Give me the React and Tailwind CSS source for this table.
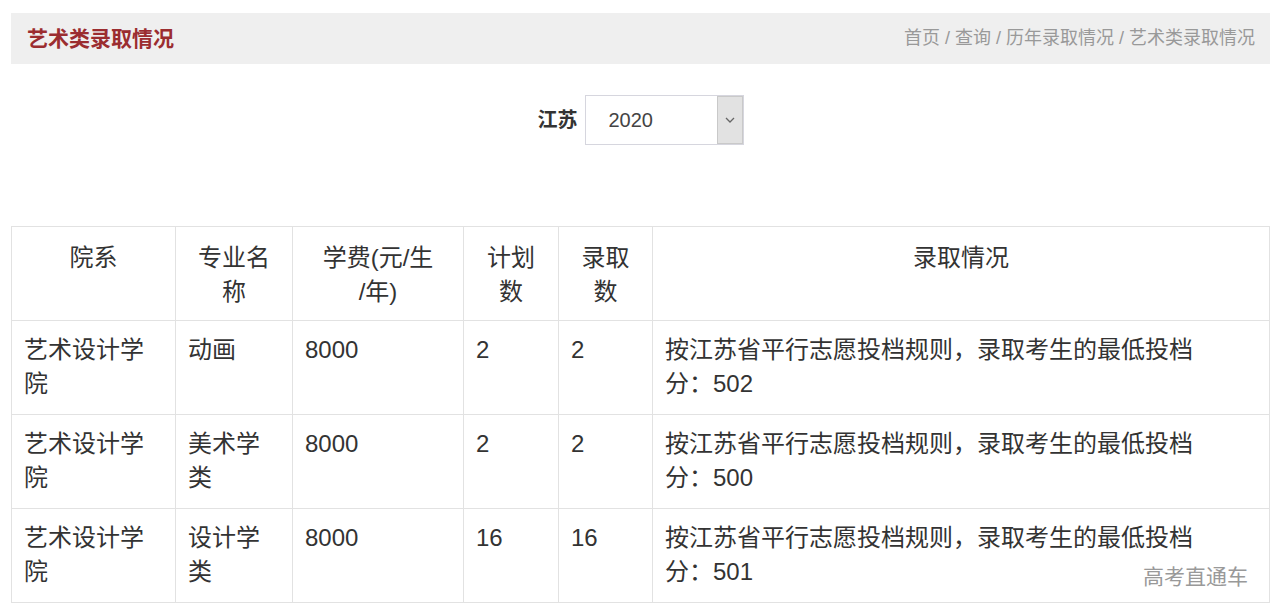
const rows = [
  { dept: "艺术设计学院", major: "动画", fee: "8000", plan: "2", admit: "2", score: "502" },
  { dept: "艺术设计学院", major: "美术学类", fee: "8000", plan: "2", admit: "2", score: "500" },
  { dept: "艺术设计学院", major: "设计学类", fee: "8000", plan: "16", admit: "16", score: "501" },
];

const headers = ["院系", "专业名称", ["学费(元/生", "/年)"], "计划数", "录取数", "录取情况"];

function App() {
  return (
    <div
      className="relative min-h-[615px] bg-white pl-[11px] pr-[10px] pt-[13px] text-[#333]"
      style={{ fontFamily: '"Liberation Sans", "Noto Sans CJK SC", sans-serif' }}
    >
      {/* Title bar */}
      <div className="flex h-[51px] items-center justify-between bg-[#efefef] pl-[16px] pr-[15px]">
        <h1 className="text-[21px] font-bold text-[#9b2d30]">艺术类录取情况</h1>
        <div className="text-[18px] text-[#999]">首页 / 查询 / 历年录取情况 / 艺术类录取情况</div>
      </div>

      {/* Province / year */}
      <div className="mt-[31px] flex items-center justify-center gap-[7px]">
        <span className="text-[20px] font-bold text-[#333]">江苏</span>
        <div className="relative h-[50px] w-[159px]">
          <select
            defaultValue="2020"
            className="h-full w-full appearance-none border border-[#d6d6de] bg-white pl-[23px] text-[20px] text-[#444] outline-none"
          >
            <option>2020</option>
            <option>2019</option>
            <option>2018</option>
          </select>
          <div className="pointer-events-none absolute right-[1px] top-[1px] flex h-[48px] w-[26px] items-center justify-center border border-[#c9c9c9] bg-[#e2e2e2]">
            <svg width="10" height="6" viewBox="0 0 10 6" fill="none">
              <path d="M1 1l4 4 4-4" stroke="#666" strokeWidth="1.3" />
            </svg>
          </div>
        </div>
      </div>

      {/* Table */}
      <table className="mt-[81px] w-full table-fixed border-collapse text-[24px] leading-[34px]">
        <colgroup>
          <col className="w-[164px]" />
          <col className="w-[117px]" />
          <col className="w-[171px]" />
          <col className="w-[95px]" />
          <col className="w-[94px]" />
          <col />
        </colgroup>
        <thead>
          <tr>
            {headers.map((h, i) => (
              <th
                key={i}
                className="h-[94px] border border-[#e2e2e2] px-[12px] pt-[14px] pb-[10px] text-center align-top font-normal"
              >
                {Array.isArray(h) ? (
                  <>
                    {h[0]}
                    <br />
                    {h[1]}
                  </>
                ) : (
                  h
                )}
              </th>
            ))}
          </tr>
        </thead>
        <tbody>
          {rows.map((r, i) => (
            <tr key={i}>
              <td className="border border-[#e2e2e2] px-[12px] pt-[12px] pb-[13px] align-top">{r.dept}</td>
              <td className="border border-[#e2e2e2] px-[12px] pt-[12px] pb-[13px] align-top">{r.major}</td>
              <td className="border border-[#e2e2e2] px-[12px] pt-[12px] pb-[13px] align-top">{r.fee}</td>
              <td className="border border-[#e2e2e2] px-[12px] pt-[12px] pb-[13px] align-top">{r.plan}</td>
              <td className="border border-[#e2e2e2] px-[12px] pt-[12px] pb-[13px] align-top">{r.admit}</td>
              <td className="border border-[#e2e2e2] px-[12px] pt-[12px] pb-[13px] align-top">
                按江苏省平行志愿投档规则，录取考生的最低投档
                <br />
                分：{r.score}
              </td>
            </tr>
          ))}
        </tbody>
      </table>

      {/* Watermark */}
      <div className="absolute left-[1143px] top-[561px] text-[21px] text-[#999]">高考直通车</div>
    </div>
  );
}

export default App;
